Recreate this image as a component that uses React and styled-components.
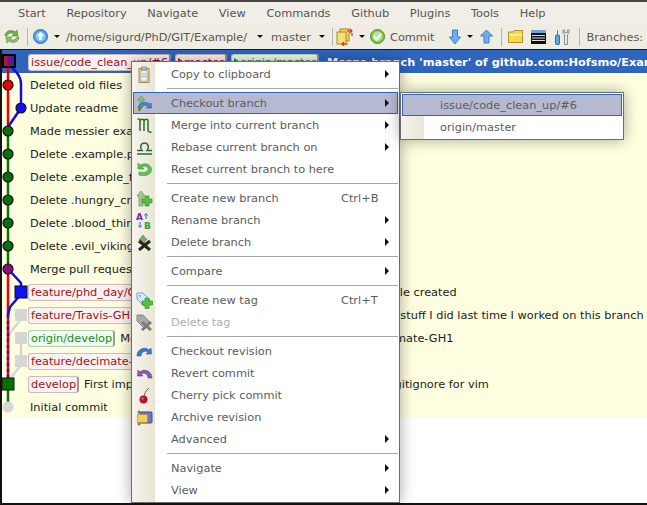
import React from 'react';
import styled, {createGlobalStyle} from 'styled-components';

const Global = createGlobalStyle`
html, body {
  margin:0;
  padding:0;
  height:100%;
  overflow:hidden;
  background:#fff;
}
#root {
  height:100%;
}
`

const Window = styled.div`
position:relative;
width:647px;
height:505px;
overflow:hidden;
display:flex;
flex-direction:column;
font-family:"DejaVu Sans", sans-serif;
font-size:11.33px;
border-top:2px solid #45453f;
box-sizing:border-box;
background:#f0eee6;
`

const MenuBar = styled.div`
display:flex;
align-items:center;
gap:20.7px;
height:22px;
padding-left:18px;
color:#555;
background:#f0eee6;
flex:none;
`

const ToolBar = styled.div`
display:flex;
align-items:center;
height:25px;
padding-left:3px;
color:#5b5550;
background:#eeece3;
flex:none;
white-space:nowrap;
`

const Tool = styled.span`
display:inline-flex;
align-items:center;
margin-left:${props => props.$ml || 0}px;
`

const ToolSep = styled.span`
width:1px;
height:18px;
background:#b8b6ac;
margin-left:${props => props.$ml || 0}px;
flex:none;
`

const Caret = styled.span`
width:0;
height:0;
border-left:3px solid transparent;
border-right:3px solid transparent;
border-top:3px solid #111;
margin-left:${props => props.$ml || 0}px;
flex:none;
`

const Content = styled.div`
flex:1;
position:relative;
background:#fff;
border-top:1px solid #1c1c1c;
border-left:2px solid #111;
border-bottom:2px solid #111;
overflow:hidden;
`

const Rows = styled.div`
display:flex;
flex-direction:column;
`

const Row = styled.div`
box-sizing:border-box;
display:flex;
align-items:center;
height:23px;
padding:1px 0 0 ${props => props.$plain ? 28 : 26}px;
white-space:nowrap;
color:${props => props.$sel ? '#fff' : '#1c1c1c'};
font-weight:${props => props.$sel ? 'bold' : 'normal'};
background:${props => props.$sel ? '#2f65bd' : '#fefee0'};
`

const Pill = styled.span`
display:inline-flex;
align-items:center;
height:15px;
padding:0 1px 0 2px;
margin-right:${props => props.$mr ?? 5}px;
border:1px solid ${props => props.$green ? '#b9cfbb' : '#cfb9b9'};
border-right:2px solid ${props => props.$green ? '#8fa592' : '#a89292'};
border-radius:3px;
font-weight:normal;
color:${props => props.$green ? '#1a8a2a' : '#9c1420'};
background:${props => props.$green ? '#eefaf0' : '#fdf1f1'};
`

const Flag = styled.span`
width:0;
height:0;
border-top:4px solid transparent;
border-bottom:4px solid transparent;
border-left:6px solid ${props => props.$green ? '#1a8a2a' : '#c01010'};
`

const Graph = styled.svg`
position:absolute;
left:0;
top:1px;
`

const Menu = styled.div`
position:absolute;
box-sizing:border-box;
left:${props => props.$left}px;
top:${props => props.$top}px;
width:${props => props.$w}px;
padding:1px;
border:1px solid #6d6d6d;
color:#5c5c5c;
box-shadow:0 0 14px rgba(0,0,0,.35);
background:linear-gradient(90deg, #f5f3ec 0, #e9e6d6 23px, #fff 23px);
`

const Item = styled.div`
box-sizing:border-box;
position:relative;
display:flex;
align-items:center;
height:22px;
padding-left:${props => props.$pad}px;
border:1px solid ${props => props.$on ? '#2f65bd' : 'transparent'};
background:${props => props.$on ? '#b5bad2' : 'transparent'};
color:${props => props.$off ? '#b0aea8' : 'inherit'};
white-space:nowrap;
`

const ItemIcon = styled.span`
position:absolute;
left:2px;
top:2px;
width:17px;
height:17px;
display:flex;
`

const Shortcut = styled.span`
position:absolute;
left:207px;
`

const Arrow = styled.span`
position:absolute;
right:8px;
width:0;
height:0;
border-top:4px solid transparent;
border-bottom:4px solid transparent;
border-left:4px solid #111;
`

const Separator = styled.div`
height:1px;
margin:3px 0 3px 34px;
background:#a8a8a8;
`

/* toolbar icons */
const Refresh = () => <svg width="18" height="17" viewBox="0 0 18 17">
  <path d="M2 8 C2 3 8 1 12 4 L14 2 L15 8 L9 8 L11 6 C8 4 5 5 4 8 Z" fill="#6fb04a" stroke="#4d8a35" strokeWidth=".6"/>
  <path d="M16 9 C16 14 10 16 6 13 L4 15 L3 9 L9 9 L7 11 C10 13 13 12 14 9 Z" fill="#8cc45e" stroke="#4d8a35" strokeWidth=".6"/>
</svg>

const BlueCircle = () => <svg width="15" height="15" viewBox="0 0 15 15">
  <circle cx="7.5" cy="7.5" r="7" fill="#4f9be0" stroke="#2e70b5"/>
  <circle cx="7.5" cy="7.5" r="5" fill="#8cc4f2"/>
  <path d="M7.5 3 L11 7 L9 7 L9 11 L6 11 L6 7 L4 7 Z" fill="#fff"/>
</svg>

const Folders = () => <svg width="17" height="18" viewBox="0 0 17 18">
  <rect x="4" y="1" width="9" height="12" fill="#f2d25a" stroke="#a58a22"/>
  <rect x="1" y="4" width="9" height="12" fill="#f7de78" stroke="#a58a22"/>
  <path d="M11 3 L16 3 M14 1 L16 3 L14 5 M16 5 L16 8" stroke="#e03020" strokeWidth="1.2" fill="none"/>
  <path d="M6 16 L12 16 M8 14 L6 16 L8 18" stroke="#e03020" strokeWidth="1.2" fill="none"/>
</svg>

const GreenCheck = () => <svg width="15" height="15" viewBox="0 0 15 15">
  <circle cx="7.5" cy="7.5" r="7" fill="#76c043" stroke="#4c9428"/>
  <circle cx="7.5" cy="7.5" r="5" fill="#b9e29a"/>
  <path d="M4 7.5 L6.6 10.5 L11 4.5" fill="none" stroke="#fff" strokeWidth="2"/>
</svg>

const DownArrow = () => <svg width="12" height="16" viewBox="0 0 12 16">
  <path d="M3.5 1 L8.5 1 L8.5 8 L11.5 8 L6 15 L.5 8 L3.5 8 Z" fill="#6db0ec" stroke="#3a7fc4"/>
</svg>

const UpArrow = () => <svg width="13" height="15" viewBox="0 0 13 15">
  <path d="M4 14 L9 14 L9 7 L12.5 7 L6.5 1 L.5 7 L4 7 Z" fill="#6db0ec" stroke="#3a7fc4"/>
</svg>

const Folder = () => <svg width="15" height="13" viewBox="0 0 15 13">
  <path d="M.5 2 L5 2 L6 .5 L14.5 .5 L14.5 12.5 L.5 12.5 Z" fill="#f6d84e" stroke="#b09422"/>
  <rect x="1" y="4" width="13" height="1.5" fill="#fff2a8"/>
</svg>

const ListWin = () => <svg width="15" height="14" viewBox="0 0 15 14">
  <rect width="15" height="3" fill="#6ea6de"/>
  <rect y="3" width="15" height="11" fill="#111"/>
  <path d="M1 5.5 H14 M1 8 H14 M1 10.5 H14" stroke="#ddd"/>
</svg>

const Tools = () => <svg width="17" height="16" viewBox="0 0 17 16">
  <rect x="1.5" y="6" width="4" height="9.5" rx="1" fill="#5aa5e4" stroke="#2f6ea8"/>
  <rect x="3" y="1" width="1" height="5" fill="#777"/>
  <path d="M9 1 L9 4 L10.5 5.5 L10.5 15.5 L13.5 15.5 L13.5 5.5 L15 4 L15 1 L13.5 1 L13.5 3.5 L10.5 3.5 L10.5 1 Z" fill="#e8e8e8" stroke="#777" strokeWidth=".8"/>
</svg>

/* menu icons */
const ic = {
  clipboard: <svg width="17" height="17" viewBox="0 0 17 17">
    <rect x="3" y="2.5" width="10" height="14" fill="#e6cd94" stroke="#a78c52"/>
    <rect x="5" y="4.5" width="6" height="10.5" fill="#eef2f6" stroke="#9aa4b0" strokeWidth=".6"/>
    <rect x="5.5" y="1" width="5" height="3" fill="#b8bcc2" stroke="#777" strokeWidth=".6"/>
    <path d="M6 8 H10 M6 10.5 H10" stroke="#8a95a0" strokeWidth=".8"/>
  </svg>,
  checkout: <svg width="17" height="17" viewBox="0 0 17 17">
    <path d="M5 1 L9 5 L7 5 L7 9 L4 9 L4 5 L1.500 5 Z" fill="#8cc07a" stroke="#5f8f4d" strokeWidth=".6"/>
    <path d="M2 13 C3 7 10 6 13 9 L15 8 L15.500 13 L10.500 13 L12 11 C9.500 9.500 6.500 10 6 13 Z" fill="#4f86c8" stroke="#2c5c98" strokeWidth=".6"/>
    <rect x="2" y="13" width="3" height="3" fill="#6a8a3a"/>
  </svg>,
  merge: <svg width="17" height="17" viewBox="0 0 17 17">
    <path d="M1.500 2.500 C3 1.500 4 2 4 4 V14 M4 4 C5 1.500 8 1.500 8 4 V14 M8 4 C9 1.500 12 1.500 12 4 V13 C12 15 13.500 15.500 15.500 15" fill="none" stroke="#2f6b2f" strokeWidth="1.500"/>
  </svg>,
  rebase: <svg width="17" height="17" viewBox="0 0 17 17">
    <path d="M1 11.500 H6 C3.500 9 4.500 4 8.500 4 C12.500 4 13.500 9 11 11.500 H16" fill="none" stroke="#2f6b2f" strokeWidth="1.500"/>
    <path d="M1 15 H16" stroke="#2f6b2f" strokeWidth="1.500"/>
  </svg>,
  reset: <svg width="17" height="17" viewBox="0 0 17 17">
    <path d="M2 2 L2 8 L8 8 L6 6 C9 4 13 6 12 9 C11.500 11 8 12 3 11 L3 14 C9 15.500 15.500 14 15.500 8.500 C15.500 3.500 9 1 4.500 4 Z" fill="#5cc452" stroke="#3c963a" strokeWidth=".6"/>
  </svg>,
  newBranch: <svg width="17" height="17" viewBox="0 0 17 17">
    <path d="M5 1 L9 6 L7 6 L7 16 L3 16 L3 6 L1 6 Z" fill="#a8c888" stroke="#6d8f52" strokeWidth=".7"/>
    <path d="M9 6 H13 V9 H16 V13 H13 V16 H9 V13 H6 V9 H9 Z" fill="#54c040" stroke="#3a8f2c" strokeWidth=".7"/>
  </svg>,
  rename: <svg width="17" height="17" viewBox="0 0 17 17">
    <text x="0" y="8" fontSize="9" fontWeight="bold" fontFamily="DejaVu Sans" fill="#7a2aa0">A</text>
    <text x="8" y="16.500" fontSize="9" fontWeight="bold" fontFamily="DejaVu Sans" fill="#2aa030">B</text>
    <path d="M10 7 V2 M8.500 3.500 L10 1.500 L11.500 3.500 M4 10 V15 M2.500 13.500 L4 15.500 L5.500 13.500" fill="none" stroke="#3a60d0"/>
  </svg>,
  delBranch: <svg width="17" height="17" viewBox="0 0 17 17">
    <path d="M7 1 L11 6 L9 6 L9 10 L5 10 L5 6 L3 6 Z" fill="#8ca870" stroke="#5f7f48" strokeWidth=".7"/>
    <path d="M3 7 L14 16 M14 7 L3 16" stroke="#1f2a1a" strokeWidth="3"/>
  </svg>,
  newTag: <svg width="17" height="17" viewBox="0 0 17 17">
    <path d="M1 1 L7 1 L14 8 L8 14 L1 7 Z" fill="#d9ecf8" stroke="#6aa6d0"/>
    <circle cx="4" cy="4" r="1" fill="#6aa6d0"/>
    <path d="M9 6 H13 V9 H16.500 V13 H13 V16.500 H9 V13 H6 V9 H9 Z" fill="#54c040" stroke="#3a8f2c" strokeWidth=".7"/>
  </svg>,
  delTag: <svg width="17" height="17" viewBox="0 0 17 17">
    <path d="M1 1 L7 1 L14 8 L8 14 L1 7 Z" fill="#a8a8a8" stroke="#8a8a8a"/>
    <path d="M6 8 L15 16 M15 8 L6 16" stroke="#7c7c7c" strokeWidth="3"/>
  </svg>,
  revision: <svg width="17" height="17" viewBox="0 0 17 17">
    <path d="M1 13 C1 6 9 3 13 7 L15 5 L15.500 11 L10 11 L12 9 C9 7 5 9 5 13 Z" fill="#3f78c8" stroke="#24559c" strokeWidth=".6"/>
  </svg>,
  revert: <svg width="17" height="17" viewBox="0 0 17 17">
    <path d="M16 13 C16 6 8 3 4 7 L2 5 L1.500 11 L7 11 L5 9 C8 7 12 9 12 13 Z" fill="#8a5ab0" stroke="#5f3a88" strokeWidth=".6"/>
  </svg>,
  cherry: <svg width="17" height="17" viewBox="0 0 17 17">
    <path d="M8 11 C8 7 10 3 13 1" fill="none" stroke="#7a6a40"/>
    <circle cx="7.500" cy="12.500" r="4" fill="#b01828"/>
    <circle cx="6.500" cy="11.500" r="1" fill="#f09090"/>
  </svg>,
  archive: <svg width="17" height="17" viewBox="0 0 17 17">
    <rect x="4" y="3" width="12" height="11" rx="1" fill="#6d78c8" stroke="#3d4688"/>
    <rect x="1.500" y="5.500" width="10" height="8" fill="#f4d050" stroke="#a58a22" strokeWidth=".6"/>
    <circle cx="3" cy="3" r="1.500" fill="#777"/>
    <circle cx="3" cy="15" r="1.500" fill="#777"/>
  </svg>,
}

const MenuEntry = ({icon, label, shortcut, sub, on, off}) =>
  <Item $pad={37} $on={on} $off={off}>
    {icon && <ItemIcon>{ic[icon]}</ItemIcon>}
    {label}
    {shortcut && <Shortcut>{shortcut}</Shortcut>}
    {sub && <Arrow/>}
  </Item>

const Node = ({x, y, c}) => <circle cx={x} cy={y} r="5" fill={c} stroke="#111" strokeWidth="1.2"/>
const Square = ({x, y, c, s = 12, stroke = '#111'}) =>
  <rect x={x - s / 2} y={y - s / 2} width={s} height={s} fill={c} stroke={stroke}/>

const LaneGraph = () => <Graph width="30" height="380">
  <defs>
    <linearGradient id="sel" x1="0" x2="1">
      <stop offset="0" stopColor="#d0101a"/>
      <stop offset="1" stopColor="#2020d8"/>
    </linearGradient>
  </defs>
  {/* grey side branches */}
  <g fill="none" stroke="#d6d6d6" strokeWidth="2.500">
    <path d="M19 264 L19 268 L8 282 L6 288"/>
    <path d="M19 287 L19 310"/>
    <path d="M19 310 L19 314 L8 328 L6 334"/>
  </g>
  <path d="M6 12 L6 80" stroke="#ee0000" strokeWidth="2.500"/>
  <path d="M6 80 L6 218" stroke="#087008" strokeWidth="2.500"/>
  <path d="M6 218 L6 264" stroke="#ee0000" strokeWidth="2.500"/>
  <path d="M6 264 L6 333" stroke="#ee0000" strokeWidth="2.500"/>
  <path d="M6 264 L6 333" stroke="#1818d8" strokeWidth="2.500" strokeDasharray="3 3"/>
  <path d="M6 333 L6 356" stroke="#087008" strokeWidth="2.500"/>
  <g fill="none" stroke="#1010e0" strokeWidth="2.500">
    <path d="M6 12 L15 22 C18 26 19 28 19 33 L19 57 L6 76"/>
    <path d="M6 218 L19 232 L19 243 L8 256 L6 264"/>
  </g>
  <Node x={6} y={34} c="#ee0000"/>
  <Node x={19} y={57} c="#1010f0"/>
  {[80, 103, 126, 149, 172, 195].map(y => <Node key={y} x={6} y={y} c="#087008"/>)}
  <Node x={6} y={218} c="#8a1080"/>
  <rect x="1" y="4" width="12" height="12" fill="url(#sel)" stroke="#000" strokeWidth="2"/>
  <Square x={19} y={241} c="#1010f0"/>
  <Square x={19} y={264} c="#d6d6d6" s={11} stroke="#d6d6d6"/>
  <Square x={19} y={287} c="#d6d6d6" s={11} stroke="#d6d6d6"/>
  <Square x={19} y={310} c="#d6d6d6" s={11} stroke="#d6d6d6"/>
  <Square x={6} y={333} c="#087008"/>
  <circle cx="6" cy="356" r="5.500" fill="#d6d6d6"/>
</Graph>

export default function App()
{
  return <Window>
    <Global/>
    <MenuBar>
      {['Start', 'Repository', 'Navigate', 'View', 'Commands', 'Github', 'Plugins', 'Tools', 'Help'].map(m => <span key={m}>{m}</span>)}
    </MenuBar>
    <ToolBar>
      <Tool><Refresh/></Tool>
      <ToolSep $ml={6}/>
      <Tool $ml={5}><BlueCircle/></Tool>
      <Caret $ml={6}/>
      <Tool $ml={6}>/home/sigurd/PhD/GIT/Example/</Tool>
      <Caret $ml={10}/>
      <Tool $ml={8}>master</Tool>
      <Caret $ml={8}/>
      <ToolSep $ml={7}/>
      <Tool $ml={3}><Folders/></Tool>
      <Caret $ml={6}/>
      <Tool $ml={5}><GreenCheck/></Tool>
      <Tool $ml={5}>Commit</Tool>
      <Tool $ml={15}><DownArrow/></Tool>
      <Caret $ml={6}/>
      <Tool $ml={7}><UpArrow/></Tool>
      <ToolSep $ml={8}/>
      <Tool $ml={6}><Folder/></Tool>
      <Tool $ml={8}><ListWin/></Tool>
      <Tool $ml={8}><Tools/></Tool>
      <ToolSep $ml={8}/>
      <Tool $ml={6}>Branches:</Tool>
    </ToolBar>
    <Content>
      <Rows>
        <Row $sel>
          <Pill $mr={4}>issue/code_clean_up/#6</Pill>
          <Pill $mr={4}><Flag/>master</Pill>
          <Pill $green $mr={8}><Flag $green/>origin/master</Pill>
          Merge branch 'master' of github.com:Hofsmo/Example
        </Row>
        <Row $plain>Deleted old files</Row>
        <Row $plain>Update readme</Row>
        <Row $plain>Made messier example</Row>
        <Row $plain>Delete .example.py</Row>
        <Row $plain>Delete .example_file</Row>
        <Row $plain>Delete .hungry_cream</Row>
        <Row $plain>Delete .blood_thirsty</Row>
        <Row $plain>Delete .evil_viking</Row>
        <Row $plain>Merge pull request from Hofsmo</Row>
        <Row><Pill>feature/phd_day/GH1</Pill>Added the new script where an example file created</Row>
        <Row><Pill>feature/Travis-GH3</Pill>Started on my Travis config and some of the stuff I did last time I worked on this branch</Row>
        <Row><Pill $green>origin/develop</Pill>Merge remote branch 'develop' into feature/decimate-GH1</Row>
        <Row><Pill>feature/decimate-GH1</Pill>Add files</Row>
        <Row><Pill>develop</Pill>First implementation of the code with unit tests plus a gitignore for vim</Row>
        <Row $plain>Initial commit</Row>
      </Rows>
      <LaneGraph/>
      <Menu $left={129} $top={11} $w={269}>
        <MenuEntry icon="clipboard" label="Copy to clipboard" sub/>
        <Separator/>
        <MenuEntry icon="checkout" label="Checkout branch" sub on/>
        <MenuEntry icon="merge" label="Merge into current branch" sub/>
        <MenuEntry icon="rebase" label="Rebase current branch on" sub/>
        <MenuEntry icon="reset" label="Reset current branch to here"/>
        <Separator/>
        <MenuEntry icon="newBranch" label="Create new branch" shortcut="Ctrl+B"/>
        <MenuEntry icon="rename" label="Rename branch" sub/>
        <MenuEntry icon="delBranch" label="Delete branch" sub/>
        <Separator/>
        <MenuEntry label="Compare" sub/>
        <Separator/>
        <MenuEntry icon="newTag" label="Create new tag" shortcut="Ctrl+T"/>
        <MenuEntry icon="delTag" label="Delete tag" off/>
        <Separator/>
        <MenuEntry icon="revision" label="Checkout revision"/>
        <MenuEntry icon="revert" label="Revert commit"/>
        <MenuEntry icon="cherry" label="Cherry pick commit"/>
        <MenuEntry icon="archive" label="Archive revision"/>
        <MenuEntry label="Advanced" sub/>
        <Separator/>
        <MenuEntry label="Navigate" sub/>
        <MenuEntry label="View" sub/>
      </Menu>
      <Menu $left={398} $top={42} $w={224}>
        <MenuEntry label="issue/code_clean_up/#6" on/>
        <MenuEntry label="origin/master"/>
      </Menu>
    </Content>
  </Window>;
}
